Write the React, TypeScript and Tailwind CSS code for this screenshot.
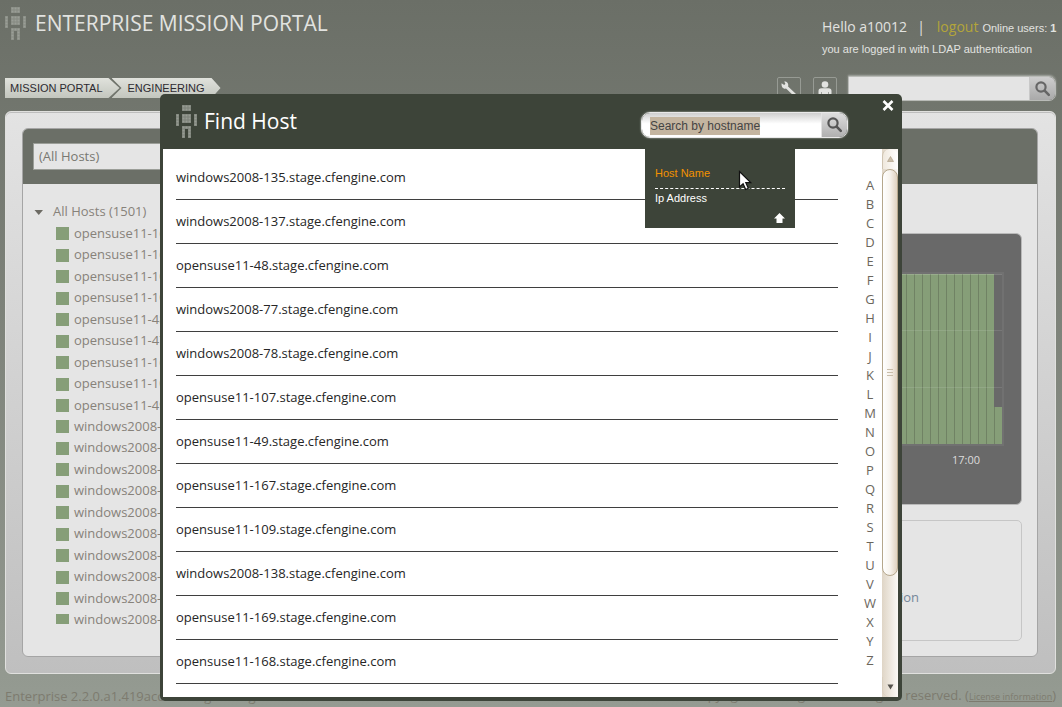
import { useEffect, useRef } from "react";

const treeHosts = [
  "opensuse11-167", "opensuse11-169", "opensuse11-107", "opensuse11-109",
  "opensuse11-48", "opensuse11-47", "opensuse11-168", "opensuse11-108",
  "opensuse11-49", "windows2008-77", "windows2008-78", "windows2008-80",
  "windows2008-81", "windows2008-82", "windows2008-83", "windows2008-84",
  "windows2008-135", "windows2008-90", "windows2008-91",
];

const foundHosts = [
  "windows2008-135", "windows2008-137", "opensuse11-48", "windows2008-77",
  "windows2008-78", "opensuse11-107", "opensuse11-49", "opensuse11-167",
  "opensuse11-109", "windows2008-138", "opensuse11-169", "opensuse11-168",
];

const letters = "ABCDEFGHIJKLMNOPQRSTUVWXYZ".split("");

function Robot({ id, base, dot }: { id: string; base: string; dot: string }) {
  return (
    <svg width="21" height="33" viewBox="0 0 21 33" className="shrink-0" aria-hidden="true">
      <defs>
        <pattern id={id} width="3" height="3" patternUnits="userSpaceOnUse">
          <rect width="3" height="3" fill={base} />
          <rect width="2" height="2" x="0.5" y="0.5" fill={dot} />
        </pattern>
      </defs>
      <path
        fill={`url(#${id})`}
        d="M6 0h9v6H6zM6 9h9v9H6zM0 9h3v12H0zM18 9h3v12h-3zM6 21h9v12h-3v-9H9v9H6z"
      />
    </svg>
  );
}

function Magnifier() {
  return (
    <svg width="16" height="16" viewBox="0 0 16 16" fill="none" stroke="currentColor" aria-hidden="true">
      <circle cx="6" cy="6" r="4.6" strokeWidth="2.2" />
      <path d="M9.600 9.600l4.200 4.200" strokeWidth="2.600" strokeLinecap="round" />
    </svg>
  );
}

function Header() {
  return (
    <header className="flex h-[111px] justify-between pr-1.5 pl-[5px]">
      <div className="pt-[7px]">
        <div className="flex items-center gap-[9px]">
          <Robot id="dots-page" base="#868a82" dot="#9a9e97" />
          <h1 className="text-[21px] leading-[33px] text-[#e2e3e0]">ENTERPRISE MISSION PORTAL</h1>
        </div>
        <nav
          aria-label="Breadcrumb"
          className="mt-[38px] flex h-5 font-['Liberation_Sans',sans-serif] text-[11px] leading-5 text-[#2e2a30]"
        >
          <a
            href="#portal"
            className="bg-linear-to-b from-[#e0e2dc] to-[#c3c6be] pr-[17px] pl-[5px] [clip-path:polygon(0_0,calc(100%-11px)_0,100%_50%,calc(100%-11px)_100%,0_100%)]"
          >
            MISSION PORTAL
          </a>
          <a
            href="#engineering"
            className="-ml-2 bg-linear-to-b from-[#e0e2dc] to-[#c3c6be] px-4 [clip-path:polygon(0_0,calc(100%-9px)_0,100%_50%,calc(100%-9px)_100%,0_100%,10px_50%)]"
          >
            ENGINEERING
          </a>
        </nav>
      </div>

      <div className="flex flex-col items-end pt-[17px] text-[#e2e3e0]">
        <div className="w-[234px] whitespace-nowrap">
          <p className="flex items-baseline leading-5">
            <span className="text-[14px]">Hello a10012</span>
            <span className="ml-2.5 text-[14px]">|</span>
            <a href="#logout" className="ml-3 text-[14px] text-[#b3a53a]">logout</a>
            <span className="ml-1 font-['Liberation_Sans',sans-serif] text-[11px]">
              Online users: <b>1</b>
            </span>
          </p>
          <p className="mt-px font-['Liberation_Sans',sans-serif] text-[11px] leading-5">
            you are logged in with LDAP authentication
          </p>
        </div>
        <div className="mt-4 flex items-start">
          <button aria-label="Settings" className="mt-0.5 mr-3 h-6 w-6 rounded-xs border border-[#979b94]">
            <svg width="22" height="22" viewBox="0 0 22 22" fill="none" stroke="#e2e3e0" aria-hidden="true">
              <path d="M8 8.500L17.500 17.500" strokeWidth="3" strokeLinecap="round" />
              <path fill="#e2e3e0" stroke="none" d="M3.600 5.200l2.600 1.800 1.200-1.200L6.200 3.600c2.600-.2 4.600 1.800 4 4.600L8 10.600c-2.600.6-4.900-1.600-4.400-5.400z" />
            </svg>
          </button>
          <button aria-label="Profile" className="mt-0.5 mr-[11px] h-6 w-6 rounded-xs border border-[#979b94]">
            <svg width="22" height="22" viewBox="0 0 22 22" fill="#e2e3e0" aria-hidden="true">
              <circle cx="11" cy="6.500" r="3.300" />
              <path d="M4.500 13q0-2.800 3-2.800h7q3 0 3 2.800v6h-2.500v-5h-.6v7H7.600v-7H7v5H4.500z" />
            </svg>
          </button>
          <form className="mt-px flex h-[25px] w-[208px] overflow-hidden rounded-r-[7px] border border-[#b9bbb7] shadow-[0_-1px_2px_#a5a8a2]">
            <input aria-label="Search" className="min-w-0 flex-1 bg-[#e4e4e4] px-2 text-[12px] outline-none" />
            <button
              type="button"
              aria-label="Find"
              className="flex w-[26px] items-center justify-center border-l border-[#c8c8c8] bg-linear-to-b from-[#cecece] to-[#a9a9a9] text-[#666]"
            >
              <Magnifier />
            </button>
          </form>
        </div>
      </div>
    </header>
  );
}

function Chart() {
  const bars = Array.from({ length: 80 }, (_, i) => i);
  return (
    <section className="h-[272px] rounded-[6px] border border-[#b9b9b9] bg-[#696969] pt-[38px] pr-[17px]">
      <div className="ml-4 flex h-[174px] border-2 border-[#717171]">
        <div className="relative flex flex-1 items-end justify-end overflow-hidden">
          {bars.map((i) => (
            <span
              key={i}
              className={
                i === 79
                  ? "h-[37px] w-2 shrink-0 border-l border-[#708264] bg-[#869e78]"
                  : "h-[170px] w-2 shrink-0 border-l border-[#708264] bg-[#869e78]"
              }
            />
          ))}
          <span className="absolute inset-x-0 top-0 h-px bg-[#ffffff]/15" />
          <span className="absolute inset-x-0 top-[56px] h-px bg-[#ffffff]/10" />
          <span className="absolute inset-x-0 top-[113px] h-px bg-[#ffffff]/10" />
        </div>
      </div>
      <p className="mt-1.5 pr-[24px] text-right text-[11px] leading-4 text-[#dcdcdc]">17:00</p>
    </section>
  );
}

function Dashboard() {
  return (
    <main className="mr-1.5 ml-[5px] h-[563px] rounded-[6px] border border-[#e0e0de] bg-linear-to-b from-[#e3e3e3] to-[#bfbfbf] py-4 pr-[17px] pl-4 shadow-[inset_0_1px_0_#bdbdbd]">
      <div className="flex h-full flex-col overflow-hidden rounded-[6px] border border-[#a5a5a5] bg-[#e5e5e5]">
        <div className="h-[55px] bg-[#6b6f67] px-2.5 pt-3.5">
          <select
            aria-label="Host group"
            className="h-[27px] w-60 appearance-none border border-[#9b9e98] bg-[#e5e5e5] pl-[5px] text-[13px] text-[#787872]"
          >
            <option>(All Hosts)</option>
          </select>
        </div>
        <div className="flex flex-1 text-[13px] text-[#87827a]">
          <aside className="w-[250px] pt-[18px] pl-[11px]">
            <button className="flex h-5 items-center gap-2">
              <svg width="10" height="5" viewBox="0 0 10 5" className="mr-px" aria-hidden="true">
                <path d="M0.500 0h8.500L4.750 5z" fill="#6d6b64" />
              </svg>
              <span>All Hosts (1501)</span>
            </button>
            <div className="h-[402px] overflow-hidden">
              <ul className="ml-[22px] grid h-[408px] auto-rows-fr">
                {treeHosts.map((host) => (
                  <li key={host} className="flex items-center gap-[5px] leading-5">
                    <span className="mt-0.5 h-[13px] w-[13px] shrink-0 bg-[#869e78]" />
                    <span>{host}</span>
                  </li>
                ))}
              </ul>
            </div>
          </aside>
          <div className="flex-1 pt-[49px] pr-[15px]">
            <Chart />
            <section className="mt-[15px] flex h-[121px] items-end justify-end rounded-[5px] border border-[#c6c6c6] pr-[102px] pb-[33px]">
              <a href="#information" className="leading-5 text-[#75879a]">More information</a>
            </section>
          </div>
        </div>
      </div>
    </main>
  );
}

function Footer() {
  return (
    <footer className="flex items-center justify-between pr-1.5 pl-[5px] pt-[11px] text-[13px] leading-5 text-[#7d7b6f]">
      <p>Enterprise 2.2.0.a1.419acc2 CFEngine engine</p>
      <p>
        Copyright © CFEngine AS. All rights reserved. (
        <a href="#license" className="text-[9px] underline">License information</a>)
      </p>
    </footer>
  );
}

function SearchBox() {
  const field = useRef<HTMLInputElement>(null);
  useEffect(() => {
    field.current?.focus();
    field.current?.select();
  }, []);
  return (
    <form className="flex h-[26px] w-[207px] overflow-hidden rounded-[9px] border border-[#e9e9e9] shadow-[0_0_2px_#c9ccc6]">
      <input
        ref={field}
        aria-label="Search by hostname"
        defaultValue="Search by hostname"
        className="min-w-0 flex-1 bg-linear-to-b from-[#cfcfcf] via-white via-45% to-white pt-0.5 pl-2 font-['Liberation_Sans',sans-serif] text-[12px] text-[#444] outline-none selection:bg-[#c4b5a0] selection:text-[#444]"
      />
      <button
        type="button"
        aria-label="Find"
        className="flex w-[26px] items-center justify-center border-l border-[#e2e2e2] bg-linear-to-b from-[#dedede] to-[#b0b0b0] text-[#555]"
      >
        <Magnifier />
      </button>
    </form>
  );
}

function SearchMenu() {
  return (
    <div className="absolute top-full right-[103px] z-10 h-[79px] w-[150px] bg-[#3d4439] px-2.5 pt-3.5 font-['Liberation_Sans',sans-serif] text-[11px]">
      <button className="block h-[26px] w-full border-b border-dashed border-white pb-1 text-left text-[#f39200]">
        Host Name
      </button>
      <button className="block h-[18px] w-full text-left text-white">Ip Address</button>
      <button aria-label="Close menu" className="mt-1.5 ml-auto block">
        <svg width="11" height="11" viewBox="0 0 11 11" fill="white" aria-hidden="true">
          <path d="M5.500 0L11 5.500H8.500V10H2.500V5.500H0z" />
        </svg>
      </button>
      <svg width="16" height="24" viewBox="0 0 16 24" className="absolute top-[21px] left-[93px]" aria-hidden="true">
        <path
          d="M1.500 1.500v15.500l3.600-3.300 2.600 5.800 2.600-1.200-2.500-5.600h4.900z"
          fill="white"
          stroke="#111"
          strokeWidth="1.200"
        />
      </svg>
    </div>
  );
}

function Scrollbar() {
  return (
    <div className="flex w-4 flex-col bg-linear-to-r from-[#dfd5c6] to-[#fbf9f6]">
      <button
        aria-label="Scroll up"
        className="flex h-5 items-center justify-center rounded-t-[7px] border-l border-[#cfc4b2] bg-linear-to-r from-[#efe8dd] to-white"
      >
        <svg width="7" height="6" viewBox="0 0 7 6" aria-hidden="true">
          <path d="M3.500 0.500L6.500 5.500h-6z" fill="#c9bda9" stroke="#a8987e" strokeWidth="0.600" />
        </svg>
      </button>
      <div className="flex h-[407px] flex-col items-center justify-center gap-0.5 rounded-[8px] border border-[#b5a78c] bg-linear-to-r from-white via-[#f7f3ed] to-[#dfd2c0]">
        <span className="h-px w-1.5 bg-[#c9bda9]" />
        <span className="h-px w-1.5 bg-[#c9bda9]" />
        <span className="h-px w-1.5 bg-[#c9bda9]" />
      </div>
      <button
        aria-label="Scroll down"
        className="mt-auto flex h-5 items-center justify-center rounded-b-[7px] border-l border-[#d9cfbf]"
      >
        <svg width="7" height="6" viewBox="0 0 7 6" aria-hidden="true">
          <path d="M0.500 0.500h6L3.500 5.500z" fill="#55524c" />
        </svg>
      </button>
    </div>
  );
}

function FindHostDialog() {
  return (
    <div className="absolute inset-x-0 top-[94px] flex justify-center">
      <section
        role="dialog"
        aria-labelledby="find-host"
        className="w-[742px] rounded-[5px] bg-[#3d4439] pr-1 pb-1 pl-[3px]"
      >
        <div className="relative flex h-[55px] items-start pl-[13px]">
          <div className="flex items-center gap-[7px] pt-[11px]">
            <Robot id="dots-dialog" base="#7b8177" dot="#969b92" />
            <h2 id="find-host" className="text-[21px] leading-[33px] text-white">Find Host</h2>
          </div>
          <div className="mt-[18px] mr-[34px] ml-auto">
            <SearchBox />
          </div>
          <button aria-label="Close" className="mt-1.5 mr-1">
            <svg width="12" height="11" viewBox="0 0 12 11" stroke="white" strokeWidth="2.600" aria-hidden="true">
              <path d="M1.500 1l9 9M10.500 1l-9 9" />
            </svg>
          </button>
          <SearchMenu />
        </div>
        <div className="flex h-[548px] bg-white">
          <ul className="ml-[13px] flex-1 pt-[7px] text-[13px] text-[#262626]">
            {foundHosts.map((host) => (
              <li key={host} className="flex h-11 items-center border-b border-[#3f3f3f]">
                <a href={`#${host}`}>{host}.stage.cfengine.com</a>
              </li>
            ))}
          </ul>
          <nav aria-label="Index" className="ml-5 w-6 pt-[27px] text-center text-[13px] text-[#6b665c]">
            {letters.map((letter) => (
              <a key={letter} href={`#${letter}`} className="block leading-[19px]">{letter}</a>
            ))}
          </nav>
          <Scrollbar />
        </div>
      </section>
    </div>
  );
}

export default function App() {
  return (
    <div className="relative min-h-screen overflow-hidden bg-linear-to-b from-[#6b6f67] to-[#959b92] font-['Open_Sans',sans-serif]">
      <Header />
      <Dashboard />
      <Footer />
      <FindHostDialog />
    </div>
  );
}
